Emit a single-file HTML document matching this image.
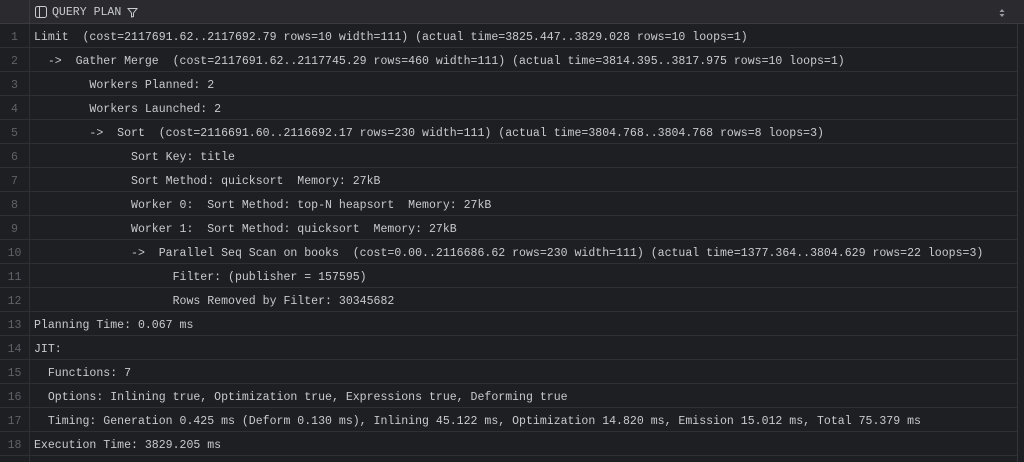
<!DOCTYPE html>
<html><head><style>
*{margin:0;padding:0;box-sizing:border-box}
body{width:1024px;height:462px;background:#1e1f22;overflow:hidden;font-family:"Liberation Mono",monospace;font-size:11.55px;color:#c9cace}
.hdr{height:24px;background:#2b2b2f;border-bottom:1px solid #3a3b3f;position:relative;display:flex;align-items:center}
.hdr .gut{width:30px;height:24px;border-right:1px solid #3a3b3f}
.hdr .t{margin-left:5px;display:flex;align-items:center;color:#c9cace;font-family:"Liberation Mono",monospace;font-size:11.55px;padding-top:1px}
.row{height:24px;display:flex;border-bottom:1px solid #2f3034;width:1017px}
.n{width:30px;flex:none;text-align:center;color:#5f6166;line-height:23px;padding-top:2px;border-right:1px solid #2f3034}
.c{padding-left:4px;line-height:23px;padding-top:2px;white-space:pre}
.sb{position:absolute;left:1017px;top:24px;width:1px;height:438px;background:#34353a}
</style></head><body>
<div class="hdr"><div class="gut"></div>
<div class="t"><svg width="12" height="12" viewBox="0 0 12 12" style="margin-right:5px"><rect x="0.5" y="0.5" width="11" height="11" rx="2" fill="none" stroke="#c9cace"/><line x1="4.5" y1="1" x2="4.5" y2="11" stroke="#c9cace"/></svg>QUERY PLAN<svg width="11" height="11" viewBox="0 0 11 11" style="margin-left:6px"><path d="M1 1.5h9L6.5 6v3.5L4.5 10V6z" fill="none" stroke="#c9cace"/></svg></div>
<svg width="6" height="10" viewBox="0 0 6 10" style="position:absolute;left:999px;top:8px"><path d="M3 1L5.5 4h-5zM3 9L0.5 6h5z" fill="#9a9ba0"/></svg>
</div>
<div class="sb"></div>
<div class="row"><div class="n">1</div><div class="c">Limit  (cost=2117691.62..2117692.79 rows=10 width=111) (actual time=3825.447..3829.028 rows=10 loops=1)</div></div>
<div class="row"><div class="n">2</div><div class="c">  ->  Gather Merge  (cost=2117691.62..2117745.29 rows=460 width=111) (actual time=3814.395..3817.975 rows=10 loops=1)</div></div>
<div class="row"><div class="n">3</div><div class="c">        Workers Planned: 2</div></div>
<div class="row"><div class="n">4</div><div class="c">        Workers Launched: 2</div></div>
<div class="row"><div class="n">5</div><div class="c">        ->  Sort  (cost=2116691.60..2116692.17 rows=230 width=111) (actual time=3804.768..3804.768 rows=8 loops=3)</div></div>
<div class="row"><div class="n">6</div><div class="c">              Sort Key: title</div></div>
<div class="row"><div class="n">7</div><div class="c">              Sort Method: quicksort  Memory: 27kB</div></div>
<div class="row"><div class="n">8</div><div class="c">              Worker 0:  Sort Method: top-N heapsort  Memory: 27kB</div></div>
<div class="row"><div class="n">9</div><div class="c">              Worker 1:  Sort Method: quicksort  Memory: 27kB</div></div>
<div class="row"><div class="n">10</div><div class="c">              ->  Parallel Seq Scan on books  (cost=0.00..2116686.62 rows=230 width=111) (actual time=1377.364..3804.629 rows=22 loops=3)</div></div>
<div class="row"><div class="n">11</div><div class="c">                    Filter: (publisher = 157595)</div></div>
<div class="row"><div class="n">12</div><div class="c">                    Rows Removed by Filter: 30345682</div></div>
<div class="row"><div class="n">13</div><div class="c">Planning Time: 0.067 ms</div></div>
<div class="row"><div class="n">14</div><div class="c">JIT:</div></div>
<div class="row"><div class="n">15</div><div class="c">  Functions: 7</div></div>
<div class="row"><div class="n">16</div><div class="c">  Options: Inlining true, Optimization true, Expressions true, Deforming true</div></div>
<div class="row"><div class="n">17</div><div class="c">  Timing: Generation 0.425 ms (Deform 0.130 ms), Inlining 45.122 ms, Optimization 14.820 ms, Emission 15.012 ms, Total 75.379 ms</div></div>
<div class="row"><div class="n">18</div><div class="c">Execution Time: 3829.205 ms</div></div>
<div style="height:6px;width:30px;border-right:1px solid #2f3034"></div>
</body></html>
